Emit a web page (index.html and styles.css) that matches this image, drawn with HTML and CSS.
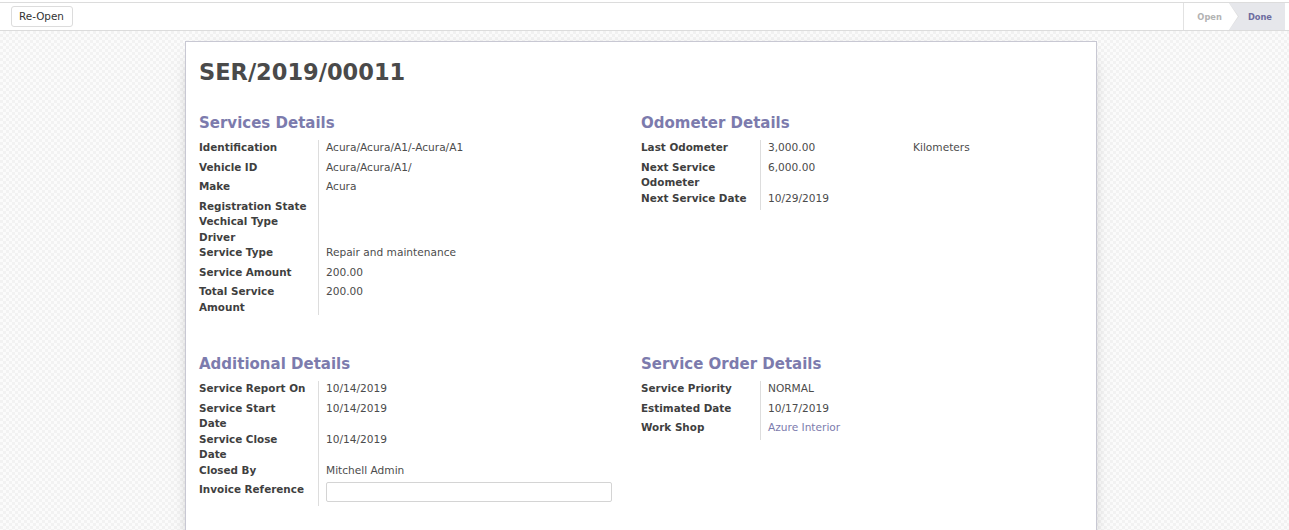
FILE: index.html
```html
<!DOCTYPE html>
<html>
<head>
<meta charset="utf-8">
<link rel="stylesheet" href="styles.css">
</head>
<body>
<div class="cp-wrap">
  <div class="cp">
    <div class="cp-buttons">
      <button class="btn">Re-Open</button>
    </div>
    <div class="statusbar">
      <span class="status status-open">Open</span>
      <span class="status status-done">Done</span>
    </div>
  </div>
</div>
<div class="bg">
  <div class="sheet">
    <h1 class="title">SER/2019/00011</h1>
    <div class="groups">
      <section class="group">
        <h2 class="group-title">Services Details</h2>
        <table class="fields">
          <tr><td class="lbl">Identification</td><td class="val"><div class="v">Acura/Acura/A1/-Acura/A1</div></td></tr>
          <tr><td class="lbl">Vehicle ID</td><td class="val"><div class="v">Acura/Acura/A1/</div></td></tr>
          <tr><td class="lbl">Make</td><td class="val"><div class="v">Acura</div></td></tr>
          <tr><td class="lbl">Registration State</td><td class="val"></td></tr>
          <tr><td class="lbl">Vechical Type</td><td class="val"></td></tr>
          <tr><td class="lbl">Driver</td><td class="val"></td></tr>
          <tr><td class="lbl">Service Type</td><td class="val"><div class="v">Repair and maintenance</div></td></tr>
          <tr><td class="lbl">Service Amount</td><td class="val"><div class="v">200.00</div></td></tr>
          <tr><td class="lbl">Total Service<br>Amount</td><td class="val"><div class="v">200.00</div></td></tr>
        </table>
      </section>
      <section class="group">
        <h2 class="group-title">Odometer Details</h2>
        <table class="fields">
          <tr><td class="lbl">Last Odometer</td><td class="val"><div class="v odo"><span class="odo-num">3,000.00</span><span>Kilometers</span></div></td></tr>
          <tr><td class="lbl">Next Service<br>Odometer</td><td class="val"><div class="v">6,000.00</div></td></tr>
          <tr><td class="lbl">Next Service Date</td><td class="val"><div class="v">10/29/2019</div></td></tr>
        </table>
      </section>
      <section class="group">
        <h2 class="group-title">Additional Details</h2>
        <table class="fields">
          <tr><td class="lbl">Service Report On</td><td class="val"><div class="v">10/14/2019</div></td></tr>
          <tr><td class="lbl">Service Start<br>Date</td><td class="val"><div class="v">10/14/2019</div></td></tr>
          <tr><td class="lbl">Service Close<br>Date</td><td class="val"><div class="v">10/14/2019</div></td></tr>
          <tr><td class="lbl">Closed By</td><td class="val"><div class="v">Mitchell Admin</div></td></tr>
          <tr><td class="lbl">Invoice Reference</td><td class="val"><input class="input" type="text"></td></tr>
        </table>
      </section>
      <section class="group">
        <h2 class="group-title">Service Order Details</h2>
        <table class="fields">
          <tr><td class="lbl">Service Priority</td><td class="val"><div class="v">NORMAL</div></td></tr>
          <tr><td class="lbl">Estimated Date</td><td class="val"><div class="v">10/17/2019</div></td></tr>
          <tr><td class="lbl">Work Shop</td><td class="val"><div class="v link">Azure Interior</div></td></tr>
        </table>
      </section>
    </div>
  </div>
</div>
</body>
</html>
```
FILE: styles.css
```css
html, body {
  margin: 0;
  padding: 0;
}
body {
  font-family: "DejaVu Sans", Verdana, sans-serif;
  font-size: 10.4px;
  color: #4c4c4c;
  background: #fff;
  height: 530px;
  overflow: hidden;
}
.cp-wrap {
  padding-top: 2px;
  background: #fff;
}
.cp {
  border-top: 1px solid #dcdcdc;
  border-bottom: 1px solid #dcdcdc;
  height: 27px;
  display: flex;
  justify-content: space-between;
  padding: 0 4px 0 11px;
  background: #fff;
}
.cp-buttons {
  padding-top: 3px;
}
.btn {
  display: block;
  height: 21px;
  box-sizing: border-box;
  border: 1px solid #dcdcdc;
  border-radius: 3px;
  background: #fff;
  color: #333;
  font-family: "DejaVu Sans", Verdana, sans-serif;
  font-size: 10.4px;
  line-height: 19px;
  padding: 0 8px 0 7px;
  margin: 0;
}
.statusbar {
  display: flex;
  align-items: stretch;
}
.status {
  display: flex;
  align-items: center;
  font-weight: bold;
  font-size: 8.3px;
}
.status-open {
  position: relative;
  z-index: 1;
  border-left: 1px solid #e2e2e2;
  padding: 0 7px 0 13px;
  color: #b3b3b3;
  background: #fff;
}
.status-open::before,
.status-open::after {
  content: "";
  position: absolute;
  top: 0;
  bottom: 0;
  clip-path: polygon(0 0, 100% 50%, 0 100%);
}
.status-open::before {
  right: -10px;
  width: 10px;
  background: #dcdcdc;
}
.status-open::after {
  right: -9px;
  width: 9px;
  background: #fff;
}
.status-done {
  background: #e6e7eb;
  color: #6e6da0;
  padding: 0 13px 0 19px;
}
.bg {
  background-color: #f7f7f7;
  background-image: repeating-conic-gradient(#f2f2f2 0 25%, #fbfbfb 0 50%);
  background-size: 6px 6px;
  padding-top: 10px;
  height: 489px;
  overflow: hidden;
}
.sheet {
  margin-left: 185px;
  width: 912px;
  box-sizing: border-box;
  min-height: 510px;
  background: #fff;
  border: 1px solid #c8c8d3;
  box-shadow: 0 5px 20px -15px #000;
  padding: 17px 13px 0 13px;
}
.title {
  margin: 0;
  font-size: 22.5px;
  line-height: 26px;
  font-weight: bold;
  color: #4a4a4a;
}
.groups {
  margin-top: 29px;
  display: grid;
  grid-template-columns: 442px 1fr;
  row-gap: 40px;
}
.group-title {
  margin: 0 0 8px 0;
  font-size: 15px;
  line-height: 18px;
  font-weight: bold;
  color: #7c7bad;
}
.fields {
  border-collapse: separate;
  border-spacing: 0;
}
.fields td {
  padding: 0;
  vertical-align: top;
  line-height: 15.5px;
}
.lbl {
  width: 120px;
  min-width: 120px;
  box-sizing: border-box;
  border-right: 1px solid #dddddd;
  font-weight: bold;
  color: #3f3f3f;
  white-space: nowrap;
}
.val {
  padding-left: 7px !important;
  color: #4c4c4c;
  font-size: 10.6px;
}
.v {
  padding-bottom: 4px;
  white-space: nowrap;
}
.odo {
  display: flex;
}
.odo-num {
  width: 145px;
}
.link {
  color: #7c7bad;
}
.input {
  display: block;
  width: 286px;
  height: 20px;
  box-sizing: border-box;
  margin: 0 0 4px 0;
  border: 1px solid #d4d4d4;
  border-radius: 2px;
  background: #fff;
  padding: 0 4px;
  font-family: inherit;
  font-size: 10.4px;
}
```
